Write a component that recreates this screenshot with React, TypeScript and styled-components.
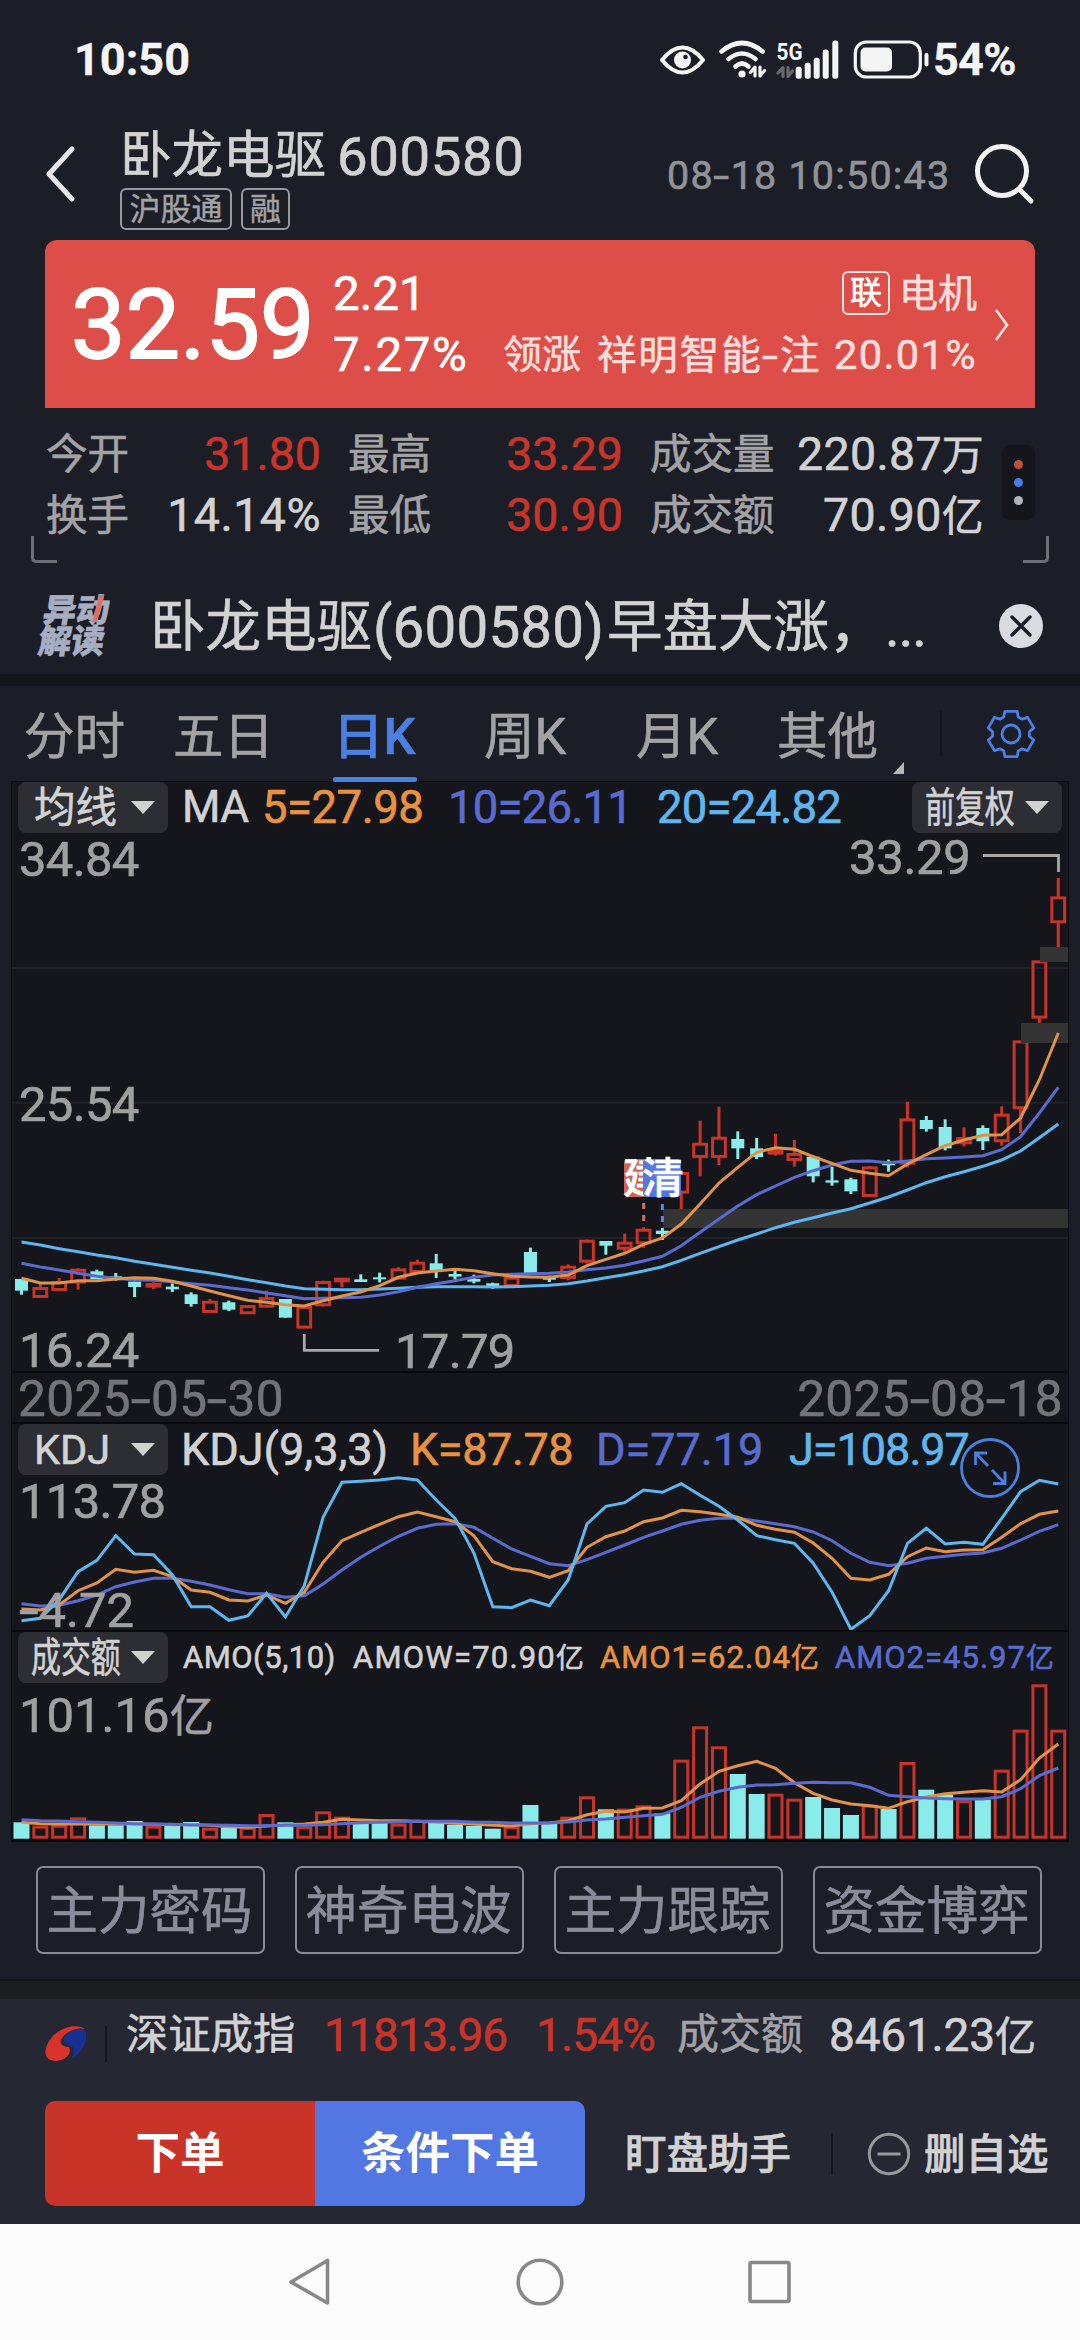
import React from "react";
import styled, { createGlobalStyle } from "styled-components";

const RED = "#c93429";
const CYAN = "#8aecea";
const ORANGE = "#e8923f";
const INDIGO = "#5a6bd0";
const SKY = "#5fb6ee";
const LIGHT = "#d2d2d3";
const MUTED = "#a3a3a6";
const BLUE = "#4a80e4";

const GlobalStyle = createGlobalStyle`
  * { box-sizing: border-box; }
  body { margin: 0; background: #1b1e27; }
`;

const Screen = styled.div`
  width: 1080px;
  height: 2340px;
  display: flex;
  flex-direction: column;
  overflow: hidden;
  background: #1b1e27;
  color: ${LIGHT};
  font-family: Roboto, "Noto Sans CJK SC", sans-serif;
  white-space: nowrap;
  -webkit-text-stroke-width: 0.6px;
`;

const Txt = styled.span<{ s: number; c?: string; ls?: number; b?: number; w?: number; nudge?: number; indent?: number }>`
  display: inline-block;
  font-size: ${(p) => p.s}px;
  line-height: 1.2;
  color: ${(p) => p.c || "inherit"};
  letter-spacing: ${(p) => p.ls || 0}px;
  font-weight: ${(p) => p.b || 400};
  width: ${(p) => (p.w ? p.w + "px" : "auto")};
  padding-left: ${(p) => p.indent || 0}px;
  flex: none;
  margin-top: ${(p) => p.nudge || 0}px;
`;

const Unit = styled.span`
  font-size: 0.9em;
`;

/* ---------- status bar ---------- */

const StatusBar = styled.header`
  height: 120px;
  display: flex;
  align-items: center;
  justify-content: space-between;
  padding: 0 64px 0 74px;
  color: #f4f4f4;
  -webkit-text-stroke-width: 0.3px;
`;

const StatusRight = styled.div`
  display: flex;
  align-items: center;
  gap: 4px;
`;

function StatusIcons() {
  return (
    <svg width="270" height="44" viewBox="657 38 270 44" fill="none" stroke="#f4f4f4" strokeLinecap="round" strokeLinejoin="round">
      <path d="M660 60 Q670 47.5 680.5 47.5 Q691 47.5 701 60 Q691 72.5 680.5 72.5 Q670 72.5 660 60Z" strokeWidth="4" />
      <circle cx="680.5" cy="60" r="8.5" fill="#f4f4f4" stroke="none" />
      <circle cx="683.5" cy="57" r="2.3" fill="#1b1e27" stroke="none" />
      <path d="M719.5 51.5 Q740 34.5 760.5 51.5" strokeWidth="4.6" />
      <path d="M726.5 59 Q740 48 753.5 59" strokeWidth="4.6" />
      <path d="M733.5 66.5 Q740 60.5 746.5 66.5" strokeWidth="4.6" />
      <circle cx="740" cy="74" r="3.6" fill="#f4f4f4" stroke="none" />
      <path d="M753 76 V67 L748.5 72.5 M758 67 V76 L762.5 70.5" strokeWidth="3.2" />
      <text x="774.5" y="59.5" fontSize="24" fontWeight="700" fill="#f4f4f4" stroke="none" textLength="26" lengthAdjust="spacingAndGlyphs">5G</text>
      <path d="M781 76.5 V67.5 L776 73 M786 67.5 V76.5 L790.5 71" stroke="#66686d" strokeWidth="3.2" />
      <g fill="#f4f4f4" stroke="none">
        <rect x="793.7" y="66.7" width="6" height="12" rx="2.5" />
        <rect x="802.7" y="62.7" width="6" height="16" rx="2.5" />
        <rect x="811.7" y="57.7" width="6" height="21" rx="2.5" />
        <rect x="820.7" y="49.5" width="6" height="29.2" rx="2.5" />
        <rect x="830.3" y="40.5" width="6" height="38.2" rx="2.5" />
        <rect x="858.5" y="47.5" width="31.5" height="24" rx="5" />
        <rect x="922.5" y="53" width="4" height="13.5" rx="2" />
      </g>
      <rect x="853.3" y="42" width="65" height="35" rx="11" strokeWidth="3.2" />
    </svg>
  );
}

/* ---------- title bar ---------- */

const TitleBar = styled.div`
  height: 120px;
  display: flex;
  padding-left: 44px;
`;

const BackIcon = styled.svg`
  margin: 24px 44px 0 0;
  flex: none;
`;

const Names = styled.div`
  width: 546px;
  display: flex;
  flex-direction: column;
`;

const NameLine = styled.div`
  height: 68px;
  padding-top: 5px;
  display: flex;
  align-items: center;
`;

const Tags = styled.div`
  display: flex;
  gap: 9px;
`;

const Tag = styled.span<{ w: number }>`
  width: ${(p) => p.w}px;
  height: 42px;
  border: 2px solid #98999d;
  border-radius: 6px;
  color: ${MUTED};
  font-size: 31px;
  line-height: 39px;
  text-align: center;
  -webkit-text-stroke-width: 0.4px;
`;

const SearchIcon = styled.svg`
  margin: 20px 0 0 22px;
  flex: none;
`;

/* ---------- price card ---------- */

const PriceCard = styled.section`
  height: 168px;
  margin: 0 45px;
  padding: 22px 24px 0 26px;
  display: flex;
  background: #dc4e47;
  border-radius: 12px 12px 0 0;
  color: #fff;
`;

const Price = styled.div`
  width: 262px;
  font-size: 97px;
  font-weight: 400;
  line-height: 126px;
  -webkit-text-stroke-width: 1.8px;
`;

const Lines = styled.div<{ end?: boolean }>`
  display: flex;
  flex-direction: column;
  padding-top: 2px;
  align-items: ${(p) => (p.end ? "flex-end" : "flex-start")};
  color: ${(p) => (p.end ? "#fbdedc" : "#fff")};
  flex: ${(p) => (p.end ? 1 : "none")};
`;

const Line = styled.div`
  height: 61px;
  display: flex;
  align-items: center;
`;

const Box = styled.span`
  width: 48px;
  height: 44px;
  margin: -2px 9px 0 0;
  border: 2px solid #fbe6e4;
  border-radius: 6px;
  font-size: 32px;
  line-height: 41px;
  text-align: center;
  color: #fff;
`;

const CardChevron = styled.svg`
  margin: 45px 0 0 16px;
  flex: none;
`;

/* ---------- statistics ---------- */

const StatsWrap = styled.section`
  height: 157px;
  margin: 0 31px;
  padding: 17px 0 0 15px;
  position: relative;
  display: flex;
`;

const Stats = styled.div`
  width: 938px;
  display: grid;
  grid-template-columns: 275px 275px 334px;
  grid-auto-rows: 61px;
  column-gap: 27px;
`;

const Stat = styled.div`
  display: flex;
  align-items: center;
  justify-content: space-between;
`;

const More = styled.div`
  width: 33px;
  height: 75px;
  margin: 20px 0 0 18px;
  padding: 15px 0;
  border-radius: 8px;
  background: #15161b;
  display: flex;
  flex-direction: column;
  align-items: center;
  justify-content: space-between;
`;

const Dot = styled.i<{ c: string }>`
  width: 9px;
  height: 9px;
  border-radius: 50%;
  background: ${(p) => p.c};
`;

const Corner = styled.i<{ side: "left" | "right" }>`
  position: absolute;
  bottom: 1px;
  ${(p) => p.side}: 0;
  width: 26px;
  height: 27px;
  border-bottom: 3px solid #6d6f75;
  border-${(p) => p.side}: 3px solid #6d6f75;
  border-bottom-${(p) => p.side}-radius: 5px;
`;

/* ---------- news strip ---------- */

const News = styled.section`
  height: 110px;
  display: flex;
  align-items: center;
  padding: 13px 37px 0 41px;
`;

const NewsLogo = styled.div`
  width: 66px;
  margin-right: 43px;
  position: relative;
  transform: skewX(-9deg);
  font-size: 33px;
  font-weight: 900;
  line-height: 31px;
  color: #a8aec2;
`;

const LogoSlash = styled.i`
  position: absolute;
  right: 9px;
  top: 0;
  width: 5px;
  height: 27px;
  background: #e0705f;
  transform: skewX(-6deg);
`;

const CloseIcon = styled.svg`
  margin-left: auto;
`;

const Gap = styled.div`
  height: 12px;
  background: #15161b;
`;

/* ---------- tabs ---------- */

const Tabs = styled.nav`
  height: 96px;
  display: flex;
`;

const Tab = styled.div<{ w: number; on?: boolean; pad: number }>`
  width: ${(p) => p.w}px;
  padding-left: ${(p) => p.pad}px;
  height: 96px;
  font-size: 50.5px;
  line-height: 101px;
  color: ${(p) => (p.on ? BLUE : MUTED)};
  font-weight: ${(p) => (p.on ? 500 : 400)};
  position: relative;
  &::after {
    content: "";
    display: ${(p) => (p.on ? "block" : "none")};
    position: absolute;
    left: 33px;
    bottom: 0;
    width: 84px;
    height: 5px;
    border-radius: 2px;
    background: ${BLUE};
  }
`;

const TabCorner = styled.svg`
  margin: 76px 0 0 0;
`;

const TabDivider = styled.i`
  width: 2px;
  height: 45px;
  margin: 25px 45px 0 36px;
  background: #15161b;
`;

const GearIcon = styled.svg`
  margin-top: 22px;
`;

function gearPath(cx: number, cy: number) {
  const pts: string[] = [];
  const at = (r: number, deg: number) => {
    const a = ((deg - 90) * Math.PI) / 180;
    return `${(cx + r * Math.cos(a)).toFixed(1)} ${(cy + r * Math.sin(a)).toFixed(1)}`;
  };
  for (let k = 0; k < 6; k++) {
    const d = k * 60;
    pts.push(at(18.5, d - 23), at(23.5, d - 15), at(23.5, d + 15), at(18.5, d + 23));
  }
  return "M" + pts.join(" L") + "Z";
}

/* ---------- charts ---------- */

const Charts = styled.section`
  width: 1056px;
  margin: 0 auto;
  display: flex;
  flex-direction: column;
  background: #15161b;
  box-shadow: 0 0 0 1px #0c0d10;
`;

const Panel = styled.div<{ h: number }>`
  height: ${(p) => p.h}px;
  position: relative;
  border-bottom: 2px solid #0a0a0c;
`;

const Plot = styled.svg`
  position: absolute;
  left: 0;
  top: 0;
`;

const Legend = styled.div`
  height: 51px;
  padding-left: 6px;
  display: flex;
  align-items: center;
  position: relative;
`;

const Chip = styled.div`
  width: 150px;
  height: 51px;
  border-radius: 8px;
  background: #2d2e34;
  display: flex;
  align-items: center;
  justify-content: space-between;
  padding: 0 13px 0 16px;
  flex: none;
`;

const ChipText = styled.span<{ narrow?: boolean }>`
  width: ${(p) => (p.narrow ? 90 : 96)}px;
  margin-left: ${(p) => (p.narrow ? -3 : 0)}px;
  font-size: ${(p) => (p.narrow ? 41 : 41.5)}px;
  line-height: 52px;
  transform-origin: left;
  transform: scaleX(${(p) => (p.narrow ? 0.73 : 1)});
`;

const Arrow = styled.i`
  border: 12px solid transparent;
  border-top: 13px solid ${LIGHT};
  border-bottom: 0;
`;

const Label = styled.span<{ x: number; y: number; ls?: number }>`
  position: absolute;
  left: ${(p) => p.x}px;
  top: ${(p) => p.y}px;
  font-size: 49px;
  line-height: 44px;
  letter-spacing: ${(p) => p.ls ?? -0.7}px;
  color: #a09fa2;
`;

const Dates = styled.div`
  height: 51px;
  padding: 3px 5px 0 6px;
  display: flex;
  align-items: center;
  justify-content: space-between;
  border-bottom: 2px solid #0a0a0c;
`;

const DateText = styled.span`
  font-size: 49.5px;
  line-height: 44px;
  letter-spacing: 0.4px;
  color: #737478;
`;

const Hyphen = styled.span`
  display: inline-block;
  margin: 0 0.06em;
  transform: scaleX(1.45);
`;

const MarkTag = styled.span<{ x: number; c: string }>`
  position: absolute;
  left: ${(p) => p.x}px;
  top: 377px;
  width: 38px;
  height: 38px;
  border-radius: 4px;
  background: ${(p) => p.c};
  color: #fff;
  font-size: 42px;
  font-weight: 500;
  line-height: 40px;
  text-indent: -1px;
`;

const X0 = 21.5;
const STEP = 18.85;
const xAt = (i: number) => X0 + STEP * i;

type Candle = [number, number, number, number, number];
/* [rising, high, bodyTop, bodyBottom, low] in thirds of a pixel below y = 1060 */
const candles: Candle[] = [
  [0, 660, 660, 695, 707], [1, 670, 688, 713, 713], [1, 657, 670, 692, 692], [1, 628, 633, 670, 692],
  [0, 632, 637, 660, 660], [0, 642, 652, 660, 665], [0, 668, 668, 684, 714], [1, 670, 676, 682, 690],
  [0, 673, 683, 691, 699], [0, 700, 706, 735, 743], [1, 720, 729, 758, 758], [0, 725, 730, 752, 756],
  [1, 740, 742, 762, 765], [1, 695, 718, 742, 745], [0, 720, 720, 776, 776], [1, 745, 745, 805, 805],
  [1, 665, 670, 738, 742], [1, 658, 660, 666, 685], [0, 646, 661, 669, 669], [0, 641, 655, 661, 670],
  [1, 625, 632, 658, 660], [1, 602, 612, 638, 640], [0, 585, 613, 634, 657], [0, 636, 645, 653, 661],
  [0, 647, 660, 668, 673], [0, 671, 673, 683, 689], [1, 655, 657, 680, 680], [0, 566, 579, 645, 645],
  [0, 650, 657, 662, 669], [1, 616, 624, 656, 664], [1, 542, 546, 607, 614], [0, 546, 546, 560, 587],
  [1, 524, 552, 568, 578], [1, 505, 513, 552, 566], [0, 507, 515, 525, 543], [1, 340, 343, 400, 450],
  [1, 185, 255, 293, 352], [1, 143, 237, 293, 318], [0, 217, 240, 268, 300], [0, 237, 268, 294, 300],
  [1, 224, 275, 283, 290], [1, 243, 286, 302, 323], [0, 290, 293, 352, 370], [0, 324, 364, 371, 380],
  [0, 356, 361, 397, 405], [1, 322, 326, 410, 410], [0, 302, 314, 319, 338], [1, 128, 182, 313, 325],
  [0, 171, 183, 210, 218], [0, 181, 204, 268, 274], [1, 205, 238, 252, 262], [0, 199, 207, 247, 273],
  [1, 142, 168, 246, 260], [1, -52, -52, 147, 222], [1, -292, -292, -125, -108], [1, -543, -484, -411, -335],
];

const ma5 = [658, 672, 672, 665, 665, 660, 656, 658, 667, 681, 696, 710, 724, 730, 737, 741, 725, 711, 699, 680, 655, 642, 636, 631, 635, 644, 652, 654, 655, 648, 620, 601, 583, 556, 537, 495, 435, 372, 325, 280, 266, 271, 293, 313, 334, 343, 350, 315, 287, 260, 243, 229, 227, 177, 62, -78];
const ma10 = [613, 624, 633, 643, 652, 658, 663, 664, 668, 674, 679, 686, 693, 702, 710, 719, 718, 716, 715, 708, 698, 685, 674, 665, 655, 648, 646, 644, 643, 639, 632, 627, 619, 606, 592, 560, 520, 480, 441, 407, 381, 355, 335, 318, 307, 306, 311, 306, 299, 297, 294, 290, 272, 233, 162, 85];
const ma20 = [549, 558, 569, 578, 588, 596, 607, 616, 625, 634, 642, 652, 662, 671, 681, 689, 691, 692, 692, 690, 688, 685, 683, 683, 683, 684, 683, 681, 679, 674, 666, 656, 647, 636, 623, 604, 583, 563, 543, 525, 506, 490, 476, 462, 449, 432, 414, 393, 371, 353, 338, 322, 303, 276, 236, 195];

const kLine = [600, 603, 588, 545, 522, 481, 490, 484, 503, 543, 550, 573, 576, 558, 583, 550, 460, 395, 370, 346, 323, 309, 323, 338, 380, 458, 479, 487, 505, 485, 415, 383, 366, 338, 327, 304, 308, 316, 325, 349, 361, 370, 402, 448, 508, 513, 496, 443, 417, 428, 423, 422, 385, 344, 316, 306];
const dLine = [584, 591, 589, 575, 558, 533, 519, 508, 508, 517, 528, 542, 554, 554, 565, 560, 525, 483, 445, 412, 382, 358, 346, 344, 355, 388, 420, 442, 464, 470, 452, 430, 408, 385, 366, 346, 334, 328, 328, 336, 344, 353, 369, 395, 433, 460, 470, 463, 448, 442, 436, 432, 418, 393, 367, 347];
const jLine = [635, 628, 572, 488, 454, 380, 435, 437, 497, 593, 593, 634, 621, 553, 624, 530, 325, 220, 217, 213, 206, 213, 273, 328, 432, 593, 596, 573, 590, 513, 345, 292, 281, 243, 250, 224, 259, 292, 333, 380, 392, 403, 463, 550, 661, 620, 545, 403, 358, 405, 400, 406, 328, 248, 214, 225];

const bars = [1243, 1253, 1250, 1228, 1252, 1252, 1239, 1253, 1254, 1242, 1259, 1259, 1257, 1218, 1243, 1255, 1210, 1226, 1245, 1245, 1247, 1236, 1243, 1250, 1254, 1262, 1255, 1191, 1247, 1226, 1165, 1204, 1202, 1192, 1216, 1055, 955, 1015, 1098, 1158, 1157, 1172, 1167, 1200, 1221, 1190, 1203, 1062, 1145, 1160, 1177, 1175, 1085, 965, 829, 965];
const amo5 = [1243, 1247, 1248, 1248, 1248, 1248, 1248, 1249, 1250, 1250, 1252, 1256, 1258, 1254, 1250, 1248, 1243, 1234, 1236, 1238, 1238, 1240, 1243, 1246, 1249, 1252, 1254, 1247, 1245, 1238, 1220, 1210, 1212, 1201, 1200, 1178, 1128, 1090, 1073, 1060, 1081, 1124, 1156, 1176, 1188, 1193, 1201, 1181, 1167, 1157, 1153, 1148, 1152, 1115, 1050, 1008];
const amo10 = [1235, 1238, 1239, 1241, 1243, 1245, 1247, 1248, 1249, 1251, 1251, 1252, 1253, 1253, 1252, 1252, 1250, 1247, 1244, 1243, 1242, 1240, 1240, 1240, 1243, 1243, 1245, 1245, 1245, 1242, 1236, 1233, 1228, 1223, 1219, 1198, 1168, 1150, 1138, 1131, 1130, 1126, 1123, 1124, 1124, 1138, 1162, 1166, 1170, 1172, 1173, 1173, 1166, 1142, 1103, 1080];

function Curve({ data, base, color }: { data: number[]; base: number; color: string }) {
  const points = data.map((v, i) => `${xAt(i).toFixed(1)},${(base + v / 3).toFixed(1)}`).join(" ");
  return <polyline points={points} fill="none" stroke={color} strokeWidth="3" />;
}

function CandleShape({ c, i }: { c: Candle; i: number }) {
  const [up, high, top, bottom, low] = c;
  const y = (v: number) => 1060 + v / 3;
  const x = xAt(i);
  if (!up) {
    return (
      <g fill={CYAN}>
        <rect x={x - 1.5} y={y(high)} width="3" height={y(low) - y(high)} />
        <rect x={x - 6.5} y={y(top)} width="13" height={y(bottom) - y(top)} />
      </g>
    );
  }
  const h = Math.max(y(bottom) - y(top) - 0.4, 0.6);
  return (
    <g stroke={RED} strokeWidth="3" fill="none">
      {top > high && <line x1={x} x2={x} y1={y(high)} y2={y(top)} />}
      <rect x={x - 6.4} y={y(top) + 0.2} width="12.8" height={h} />
      {low > bottom && <line x1={x} x2={x} y1={y(bottom)} y2={y(low)} />}
    </g>
  );
}

function PricePlot() {
  return (
    <Plot width="1056" height="589" viewBox="12 783 1056 589">
      {[969, 1103.7, 1239].map((y) => (
        <line key={y} x1="12" x2="1068" y1={y} y2={y} stroke="#202227" strokeWidth="2" />
      ))}
      {candles.map((c, i) => <CandleShape key={i} c={c} i={i} />)}
      <g fill="#343434">
        <rect x="663" y="1210" width="405" height="19" />
        <rect x="1021" y="1024" width="47" height="20" />
        <rect x="1040" y="948" width="28" height="15" />
      </g>
      <Curve data={ma20} base={1060} color={SKY} />
      <Curve data={ma10} base={1060} color={INDIGO} />
      <Curve data={ma5} base={1060} color="#e09348" />
      <path d="M643.7 1204 V1223" stroke="#d2705f" strokeWidth="3" strokeDasharray="6 6" />
      <path d="M662.4 1205 V1224" stroke="#5f80e8" strokeWidth="3" strokeDasharray="6 6" />
      <path d="M983 856.5 H1058.5 V873 M304.3 1335 V1351.3 H379" fill="none" stroke="#a8a6a9" strokeWidth="2.8" />
    </Plot>
  );
}

function KdjPlot() {
  return (
    <Plot width="1056" height="206" viewBox="12 1425 1056 206">
      <Curve data={dLine} base={1410} color={INDIGO} />
      <Curve data={kLine} base={1410} color="#e09348" />
      <Curve data={jLine} base={1410} color={SKY} />
    </Plot>
  );
}

function AmountPlot() {
  return (
    <Plot width="1056" height="207" viewBox="12 1634 1056 207">
      {bars.map((v, i) => {
        const top = 1410 + v / 3;
        const x = xAt(i);
        return candles[i][0] ? (
          <rect key={i} x={x - 6.5} y={top + 1.5} width="13" height={1840.7 - top - 3} fill="none" stroke={RED} strokeWidth="3" />
        ) : (
          <rect key={i} x={x - 8} y={top} width="16" height={1840.7 - top} fill={CYAN} />
        );
      })}
      <Curve data={amo5} base={1410} color="#e09348" />
      <Curve data={amo10} base={1410} color={INDIGO} />
    </Plot>
  );
}

const ExpandIcon = styled.svg`
  position: absolute;
  left: 947px;
  top: 13px;
`;

/* ---------- tools ---------- */

const Tools = styled.div`
  height: 138px;
  padding: 25px 38px 0 36px;
  display: flex;
  justify-content: space-between;
`;

const Tool = styled.div`
  width: 229px;
  height: 88px;
  border: 2px solid #888a97;
  border-radius: 7px;
  color: #8b8d9a;
  font-size: 51.5px;
  line-height: 88px;
  text-align: center;
  text-indent: -2px;
`;

const Shade = styled.div`
  height: 20px;
  border-top: 2px solid #15161b;
  background: #1c1d21;
`;

/* ---------- footer ---------- */

const Footer = styled.footer`
  height: 225px;
  background: #252732;
`;

const IndexRow = styled.div`
  height: 102px;
  padding: 2px 0 32px 45px;
  display: flex;
  align-items: center;
`;

const BrandIcon = styled.svg`
  margin: 17px 18px 0 0;
  flex: none;
`;

const Bar = styled.i<{ h: number; ml?: number; mr: number; mt?: number }>`
  width: 2px;
  height: ${(p) => p.h}px;
  margin: ${(p) => p.mt || 0}px ${(p) => p.mr}px 0 ${(p) => p.ml || 0}px;
  background: #15161e;
  flex: none;
`;

const ActionRow = styled.div`
  height: 105px;
  padding-left: 45px;
  display: flex;
  align-items: center;
`;

const Action = styled.button<{ c: string; side: "left" | "right" }>`
  width: 270px;
  height: 105px;
  border: 0;
  padding: 0;
  border-radius: ${(p) => (p.side === "left" ? "10px 0 0 10px" : "0 10px 10px 0")};
  background: ${(p) => p.c};
  color: #fff;
  font-family: inherit;
  font-size: 44.5px;
  font-weight: 700;
  line-height: 107px;
  -webkit-text-stroke-width: 0;
`;

const NavBar = styled.div`
  height: 116px;
  background: #fcfcfc;
  display: flex;
  align-items: center;
  justify-content: center;
`;

export default function App() {
  return (
    <Screen>
      <GlobalStyle />
      <StatusBar>
        <Txt s={45} b={700}>10:50</Txt>
        <StatusRight>
          <StatusIcons />
          <Txt s={45} b={700} ls={-0.6}>54%</Txt>
        </StatusRight>
      </StatusBar>

      <TitleBar>
        <BackIcon width="32" height="60" viewBox="0 0 32 60" fill="none">
          <path d="M28 5 L5 30 L28 55" stroke="#e6e6e8" strokeWidth="5" strokeLinecap="round" strokeLinejoin="round" />
        </BackIcon>
        <Names>
          <NameLine>
            <Txt s={51.5} w={217}>卧龙电驱</Txt>
            <Txt s={54.5} ls={0.6}>600580</Txt>
          </NameLine>
          <Tags>
            <Tag w={112}>沪股通</Tag>
            <Tag w={49}>融</Tag>
          </Tags>
        </Names>
        <Txt s={39.5} c="#929397" ls={1.2} w={284} nudge={32} indent={1}>08<Hyphen>-</Hyphen>18 10:50:43</Txt>
        <SearchIcon width="66" height="66" viewBox="0 0 66 66" fill="none" stroke="#f2f2f3" strokeWidth="5" strokeLinecap="round">
          <circle cx="30" cy="31" r="24.5" />
          <path d="M48 50 L59 61" />
        </SearchIcon>
      </TitleBar>

      <PriceCard>
        <Price>32.59</Price>
        <Lines>
          <Line><Txt s={47.5}>2.21</Txt></Line>
          <Line><Txt s={47.5} ls={1.6}>7.27%</Txt></Line>
        </Lines>
        <Lines end>
          <Line>
            <Box>联</Box>
            <Txt s={39}>电机</Txt>
          </Line>
          <Line>
            <Txt s={39} w={94}>领涨</Txt>
            <Txt s={39.5} ls={1.9} w={237}>祥明智能<Hyphen>-</Hyphen>注</Txt>
            <Txt s={41.5} ls={1.4}>20.01%</Txt>
          </Line>
        </Lines>
        <CardChevron width="18" height="36" viewBox="0 0 18 36" fill="none">
          <path d="M3 3 L14 18 L3 33" stroke="#fbe3e1" strokeWidth="2.6" />
        </CardChevron>
      </PriceCard>

      <StatsWrap>
        <Stats>
          <Stat><Txt s={41.5} c={MUTED}>今开</Txt><Txt s={46.5} c={RED}>31.80</Txt></Stat>
          <Stat><Txt s={41.5} c={MUTED}>最高</Txt><Txt s={46.5} c={RED}>33.29</Txt></Stat>
          <Stat><Txt s={41.5} c={MUTED}>成交量</Txt><Txt s={46.5} ls={0.3}>220.87<Unit>万</Unit></Txt></Stat>
          <Stat><Txt s={41.5} c={MUTED}>换手</Txt><Txt s={46.5} ls={0.5}>14.14%</Txt></Stat>
          <Stat><Txt s={41.5} c={MUTED}>最低</Txt><Txt s={46.5} c={RED}>30.90</Txt></Stat>
          <Stat><Txt s={41.5} c={MUTED}>成交额</Txt><Txt s={46.5} ls={0.4}>70.90<Unit>亿</Unit></Txt></Stat>
        </Stats>
        <More><Dot c="#c0503f" /><Dot c="#4a7ce6" /><Dot c="#b4b4b8" /></More>
        <Corner side="left" />
        <Corner side="right" />
      </StatsWrap>

      <News>
        <NewsLogo>异动<br />解读<LogoSlash /></NewsLogo>
        <Txt s={55.5} w={223} nudge={5}>卧龙电驱</Txt>
        <Txt s={56.5} w={234} nudge={5} ls={0.2}>(600580)</Txt>
        <Txt s={55.5} w={278} nudge={5}>早盘大涨，</Txt>
        <Txt s={55.5} nudge={5} ls={-1}>...</Txt>
        <CloseIcon width="44" height="44" viewBox="0 0 44 44">
          <circle cx="22" cy="22" r="22" fill="#d9dbe1" />
          <path d="M13 13 L31 31 M31 13 L13 31" stroke="#1b1e27" strokeWidth="3.4" strokeLinecap="round" />
        </CloseIcon>
      </News>
      <Gap />

      <Tabs>
        <Tab w={150} pad={24}>分时</Tab>
        <Tab w={150} pad={23}>五日</Tab>
        <Tab w={150} pad={33} on>日K</Tab>
        <Tab w={150} pad={34}>周K</Tab>
        <Tab w={150} pad={36}>月K</Tab>
        <Tab w={142} pad={27}>其他</Tab>
        <TabCorner width="12" height="12" viewBox="0 0 12 12"><path d="M12 0 V12 H1Z" fill="#b8b8ba" /></TabCorner>
        <TabDivider />
        <GearIcon width="52" height="52" viewBox="0 0 52 52" fill="none" stroke={BLUE} strokeWidth="2.8" strokeLinejoin="round">
          <path d={gearPath(24, 26)} />
          <circle cx="24" cy="26" r="9" />
        </GearIcon>
      </Tabs>

      <Charts>
        <Panel h={591}>
          <PricePlot />
          <Legend>
            <Chip><ChipText>均线</ChipText><Arrow /></Chip>
            <Txt s={44} w={94} indent={14} ls={-0.5}>MA</Txt>
            <Txt s={45.5} c={ORANGE} w={186} ls={-0.5}>5=27.98</Txt>
            <Txt s={45.5} c={INDIGO} w={209} ls={-0.8}>10=26.11</Txt>
            <Txt s={45.5} c={SKY} w={255} ls={-0.8}>20=24.82</Txt>
            <Chip><ChipText narrow>前复权</ChipText><Arrow /></Chip>
          </Legend>
          <Label x={7} y={56}>34.84</Label>
          <Label x={837} y={54} ls={-0.3}>33.29</Label>
          <Label x={7} y={301}>25.54</Label>
          <Label x={7} y={547}>16.24</Label>
          <Label x={383} y={548}>17.79</Label>
          <MarkTag x={612} c="#d2654f">建</MarkTag>
          <MarkTag x={631} c="#5577e6">清</MarkTag>
        </Panel>
        <Dates>
          <DateText>2025<Hyphen>-</Hyphen>05<Hyphen>-</Hyphen>30</DateText>
          <DateText>2025<Hyphen>-</Hyphen>08<Hyphen>-</Hyphen>18</DateText>
        </Dates>
        <Panel h={208}>
          <KdjPlot />
          <Label x={7} y={56}>113.78</Label>
          <Label x={7} y={165} ls={0}><Hyphen>-</Hyphen>4.72</Label>
          <Legend>
            <Chip><ChipText>KDJ</ChipText><Arrow /></Chip>
            <Txt s={45} w={242} indent={13}>KDJ(9,3,3)</Txt>
            <Txt s={45} c={ORANGE} w={186} ls={-0.4}>K=87.78</Txt>
            <Txt s={45} c={INDIGO} w={193}>D=77.19</Txt>
            <Txt s={45} c={SKY} ls={-1}>J=108.97</Txt>
          </Legend>
          <ExpandIcon width="62" height="62" viewBox="0 0 62 62" fill="none" stroke="#4a80dc" strokeWidth="2.8">
            <circle cx="31" cy="31" r="28.5" />
            <path d="M29 29 L17 16.5 M16.5 28 V16 H28 M33 33 L45.5 46 M46 34.5 V46.5 H34" />
          </ExpandIcon>
        </Panel>
        <Panel h={209}>
          <AmountPlot />
          <Legend>
            <Chip><ChipText narrow>成交额</ChipText><Arrow /></Chip>
            <Txt s={31} w={185} indent={15} ls={0.5}>AMO(5,10)</Txt>
            <Txt s={31} w={247} ls={1.2}>AMOW=70.90<Unit>亿</Unit></Txt>
            <Txt s={31} w={235} ls={1} c={ORANGE}>AMO1=62.04<Unit>亿</Unit></Txt>
            <Txt s={31} c={INDIGO} ls={1}>AMO2=45.97<Unit>亿</Unit></Txt>
          </Legend>
          <Label x={7} y={62} ls={0}>101.16<Unit>亿</Unit></Label>
        </Panel>
      </Charts>

      <Tools>
        <Tool>主力密码</Tool>
        <Tool>神奇电波</Tool>
        <Tool>主力跟踪</Tool>
        <Tool>资金博弈</Tool>
      </Tools>
      <Shade />

      <Footer>
        <IndexRow>
          <BrandIcon width="42" height="38" viewBox="0 0 42 38">
            <path d="M40 4 C33 -1 18 1 8 11 C-2 22 -3 36 11 36 C22 35 27 28 24 22 C19 22 13 19 17 13 C22 6 32 2 40 4Z" fill="#d8322b" />
            <path d="M40 5 C44 15 38 28 25 35 C31 28 30 22 24 20 C17 19 17 12 23 8 C29 4 36 3 40 5Z" fill="#173190" />
          </BrandIcon>
          <Bar h={36} mr={19} mt={17} />
          <Txt s={42.3} w={198}>深证成指</Txt>
          <Txt s={46} w={212} c={RED} ls={-1.3}>11813.96</Txt>
          <Txt s={46} w={141} c={RED} ls={-0.9}>1.54%</Txt>
          <Txt s={42} w={152} c={MUTED}>成交额</Txt>
          <Txt s={46} ls={-0.2}>8461.23<Unit>亿</Unit></Txt>
        </IndexRow>
        <ActionRow>
          <Action c="#c93429" side="left">下单</Action>
          <Action c="#5277e2" side="right">条件下单</Action>
          <Bar h={0} mr={38} />
          <Txt s={41.5} b={500} nudge={3}>盯盘助手</Txt>
          <Bar h={42} ml={40} mr={32} />
          <svg width="48" height="48" viewBox="0 0 48 48" fill="none" stroke="#98999d" strokeWidth="3">
            <circle cx="24" cy="24" r="19.7" />
            <path d="M12.5 24 H35.5" />
          </svg>
          <Txt s={41.5} b={500} nudge={3} indent={11}>删自选</Txt>
        </ActionRow>
      </Footer>

      <NavBar>
        <svg width="1080" height="116" viewBox="0 2224 1080 116" fill="none" stroke="#888888" strokeWidth="3.6" strokeLinejoin="round">
          <path d="M327.5 2260.5 V2303 L291 2282 Z" />
          <circle cx="540" cy="2282" r="21.8" />
          <rect x="750" y="2262.5" width="39" height="39" rx="1.5" />
        </svg>
      </NavBar>
    </Screen>
  );
}
